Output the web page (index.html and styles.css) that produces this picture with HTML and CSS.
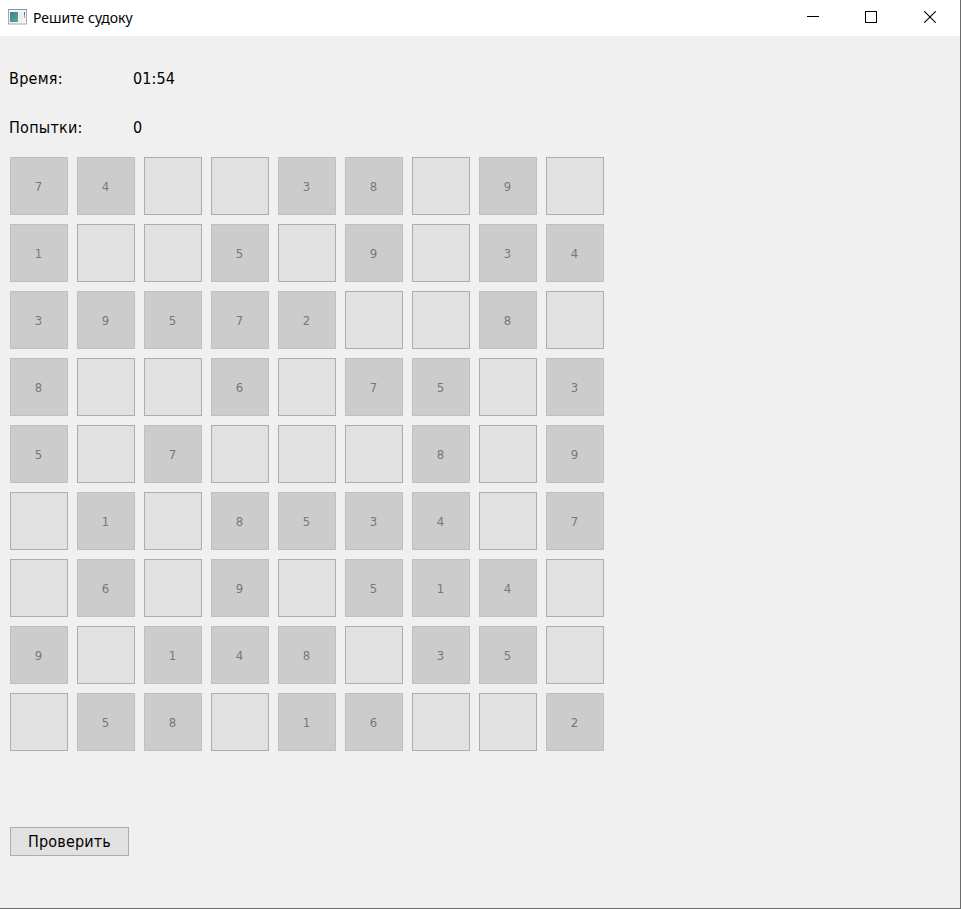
FILE: index.html
```html
<!DOCTYPE html>
<html lang="ru">
<head>
<meta charset="utf-8">
<title>Решите судоку</title>
<link rel="stylesheet" href="styles.css">
</head>
<body>
<div class="window">
  <header class="titlebar">
    <svg class="app-icon" width="19" height="16" viewBox="0 0 19 16">
      <defs><linearGradient id="g" x1="0" y1="0" x2="1" y2="1"><stop offset="0" stop-color="#4179a3"/><stop offset="1" stop-color="#5cae7b"/></linearGradient></defs>
      <rect x=".5" y=".5" width="18" height="14.5" fill="#f5f5f7" stroke="#a4a7ad"/>
      <path d="M0 .5h19" stroke="#8c929b"/>
      <rect x="2" y="3" width="8" height="10" fill="url(#g)"/>
      <path d="M11 3h4v10h-4z" fill="#e9edef"/>
      <path d="M16.5 3v3" stroke="#4179a3"/><path d="M16.5 6v3" stroke="#7dbd98"/>
    </svg>
    <span class="title">Решите судоку</span>
    <div class="controls">
      <svg width="12" height="12" viewBox="0 0 12 12" shape-rendering="crispEdges"><path d="M0 5.5h12" stroke="#000"/></svg>
      <svg width="12" height="12" viewBox="0 0 12 12" shape-rendering="crispEdges"><path d="M.5 .5h11v11H.5z" fill="none" stroke="#000"/></svg>
      <svg class="close" width="12" height="12" viewBox="0 0 12 12"><path d="M.2 .2l11.6 11.6M11.8 .2L.2 11.8" stroke="#000" stroke-width="1.1"/></svg>
    </div>
  </header>
  <main class="content">
    <div class="info"><span class="label">Время:</span><span class="value">01:54</span></div>
    <div class="info"><span class="label">Попытки:</span><span class="value">0</span></div>
    <div class="board" id="board"></div>
    <button class="check"><span>Проверить</span></button>
  </main>
</div>
<script src="board.js"></script>
</body>
</html>
```
FILE: styles.css
```css
* { box-sizing: border-box; }
body { margin: 0; font-family: "DejaVu Sans Condensed", "DejaVu Sans", sans-serif; color: #000; }
.window { width: 961px; height: 909px; background: #f0f0f0; border-right: 1px solid #6b6b6b; border-bottom: 1px solid #6b6b6b; overflow: hidden; }
.titlebar { height: 36px; background: #fff; display: flex; align-items: center; padding: 0 24px 0 8px; }
.app-icon { margin-top: -3px; }
.title { margin-left: 6px; font-family: "Noto Sans", sans-serif; font-size: 14px; line-height: 20px; }
.controls { margin-left: auto; display: flex; gap: 46px; margin-top: -2px; }
.controls svg { display: block; }
.close { margin-left: 1px; }
.content { padding: 18px 9px 0; }
.info { display: flex; height: 49px; align-items: center; font-size: 16px; line-height: 22px; }
.label { width: 124px; letter-spacing: 0.25px; }
.value { letter-spacing: 0.1px; }
.board { display: grid; grid-template-columns: repeat(9, 58px); grid-auto-rows: 58px; gap: 9px; margin: 5px 0 0 1px; }
.cell { border: 1px solid #adadad; border-radius: 0; background: #e1e1e1; padding: 2px 1px 0 0; font: 13px/18px "DejaVu Sans Condensed", "DejaVu Sans", sans-serif; color: #000; }
.cell:disabled { background: #ccc; border-color: #bfbfbf; color: #787878; }
.check { display: block; width: 119px; height: 29px; margin: 76px 0 0 1px; padding: 0; border: 1px solid #adadad; border-radius: 0; background: #e1e1e1; font: 16px/22px "DejaVu Sans Condensed", "DejaVu Sans", sans-serif; letter-spacing: 0.15px; color: #000; }
```
FILE: board.js
```js
const rows = [
  "74..38.9.", "1..5.9.34", "39572..8.",
  "8..6.75.3", "5.7...8.9", ".1.8534.7",
  ".6.9.514.", "9.148.35.", ".58.16..2"
];
const board = document.getElementById("board");
for (const n of rows.join("")) {
  const cell = document.createElement("button");
  cell.className = "cell";
  if (n !== ".") {
    cell.textContent = n;
    cell.disabled = true;
  }
  board.append(cell);
}
```
